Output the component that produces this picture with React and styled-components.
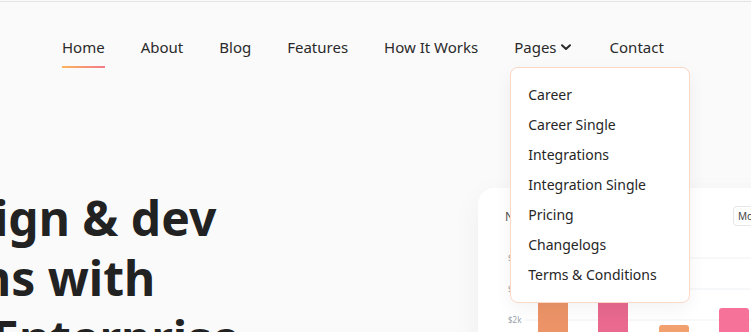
import React from "react";
import styled, { createGlobalStyle } from "styled-components";

const Global = createGlobalStyle`
  html, body { margin: 0; padding: 0; background: #fafafa; }
  body { font-family: "Noto Sans", "Open Sans", sans-serif; color: #222; overflow: hidden; }
  * { box-sizing: border-box; }
`;

const Page = styled.div`
  width: 751px;
  height: 331px;
  overflow: hidden;
  position: relative;
  margin-top: 1px;
  border-top: 1px solid #e4e4e4;
  background: #fafafa;
`;

const Nav = styled.nav`
  display: flex;
  align-items: flex-start;
  gap: 36px;
  padding: 34px 0 0 62px;
  position: relative;
  z-index: 5;
`;

const NavItem = styled.div`
  position: relative;
  display: flex;
  align-items: center;
  gap: 3px;
  font-size: 15px;
  line-height: 22px;
  color: #2a2a2a;
  padding-bottom: 8px;
  border-bottom: 2px solid transparent;
  ${(p) =>
    p.$active &&
    `border-image: linear-gradient(90deg, #fbb65a, #f4788b) 1;`}
`;

const Chevron = styled.svg`
  display: block;
  margin-right: 2px;
`;

const Dropdown = styled.ul`
  position: absolute;
  top: 31px;
  left: -4px;
  width: 180px;
  margin: 0;
  padding: 12px 0;
  list-style: none;
  background: #fff;
  border: 1px solid #fcd8c6;
  border-radius: 8px;
  box-shadow: 0 6px 18px rgba(0, 0, 0, 0.05);
`;

const DropItem = styled.li`
  font-size: 14px;
  line-height: 30px;
  padding-left: 17px;
  color: #262626;
  white-space: nowrap;
`;

const Hero = styled.section`
  display: flex;
  align-items: flex-start;
  margin-top: 120px;
`;

const Heading = styled.h1`
  flex: 0 0 478px;
  margin: 0;
  font-size: 48px;
  line-height: 60px;
  font-weight: 700;
  color: #222;
  white-space: nowrap;
`;

const Line = styled.span`
  display: block;
  margin-left: ${(p) => p.$shift}px;
`;

const Card = styled.div`
  flex: 0 0 420px;
  height: 300px;
  background: #fff;
  border-radius: 16px;
  box-shadow: 0 10px 30px rgba(0, 0, 0, 0.05);
  padding: 18px 0 0 27px;
`;

const CardHeader = styled.div`
  display: flex;
  align-items: center;
  justify-content: space-between;
  width: 288px;
  height: 20px;
`;

const CardTitle = styled.span`
  font-size: 12px;
  color: #555;
`;

const Select = styled.div`
  font-size: 10px;
  color: #444;
  border: 1px solid #e6e6e6;
  border-radius: 4px;
  padding: 3px 4px;
  width: 60px;
  line-height: 12px;
`;

const Chart = styled.svg`
  display: block;
  margin-top: 20px;
  margin-left: -27px;
`;

const bars = [
  { x: 60, top: 52, color: "#ec9468" },
  { x: 120, top: 46, color: "#e9698f" },
  { x: 181, top: 79, color: "#f3a06f" },
  { x: 241, top: 62, color: "#f67299" },
];

export default function App() {
  const pages = [
    "Career",
    "Career Single",
    "Integrations",
    "Integration Single",
    "Pricing",
    "Changelogs",
    "Terms & Conditions",
  ];
  return (
    <>
      <Global />
      <Page>
        <Nav>
          <NavItem $active>Home</NavItem>
          <NavItem>About</NavItem>
          <NavItem>Blog</NavItem>
          <NavItem>Features</NavItem>
          <NavItem>How It Works</NavItem>
          <NavItem>
            Pages
            <Chevron width="12" height="12" viewBox="0 0 12 12">
              <path d="M2 4.2 L6 8 L10 4.2" fill="none" stroke="#2a2a2a" strokeWidth="2" strokeLinecap="round" strokeLinejoin="round" />
            </Chevron>
            <Dropdown>
              {pages.map((p) => (
                <DropItem key={p}>{p}</DropItem>
              ))}
            </Dropdown>
          </NavItem>
          <NavItem>Contact</NavItem>
        </Nav>
        <Hero>
          <Heading>
            <Line $shift={-6}>ign &amp; dev</Line>
            <Line $shift={-20}>ns with</Line>
            <Line $shift={-8}>Enterprise</Line>
          </Heading>
          <Card>
            <CardHeader>
              <CardTitle>Net Revenue</CardTitle>
              <Select>Monthly</Select>
            </CardHeader>
            <Chart width="420" height="120" viewBox="0 0 420 120">
              {[12, 43, 74].map((y, i) => (
                <g key={y}>
                  <line x1="47" x2="420" y1={y} y2={y} stroke="#eef1f5" strokeWidth="1" />
                  <text x="30" y={y + 3} fontSize="8" fill="#9aa0a8" fontFamily="Noto Sans, sans-serif">
                    {["$6k", "$4k", "$2k"][i]}
                  </text>
                </g>
              ))}
              {bars.map((b) => (
                <rect key={b.x} x={b.x} y={b.top} width="30" height={120 - b.top} rx="3" fill={b.color} />
              ))}
            </Chart>
          </Card>
        </Hero>
      </Page>
    </>
  );
}
